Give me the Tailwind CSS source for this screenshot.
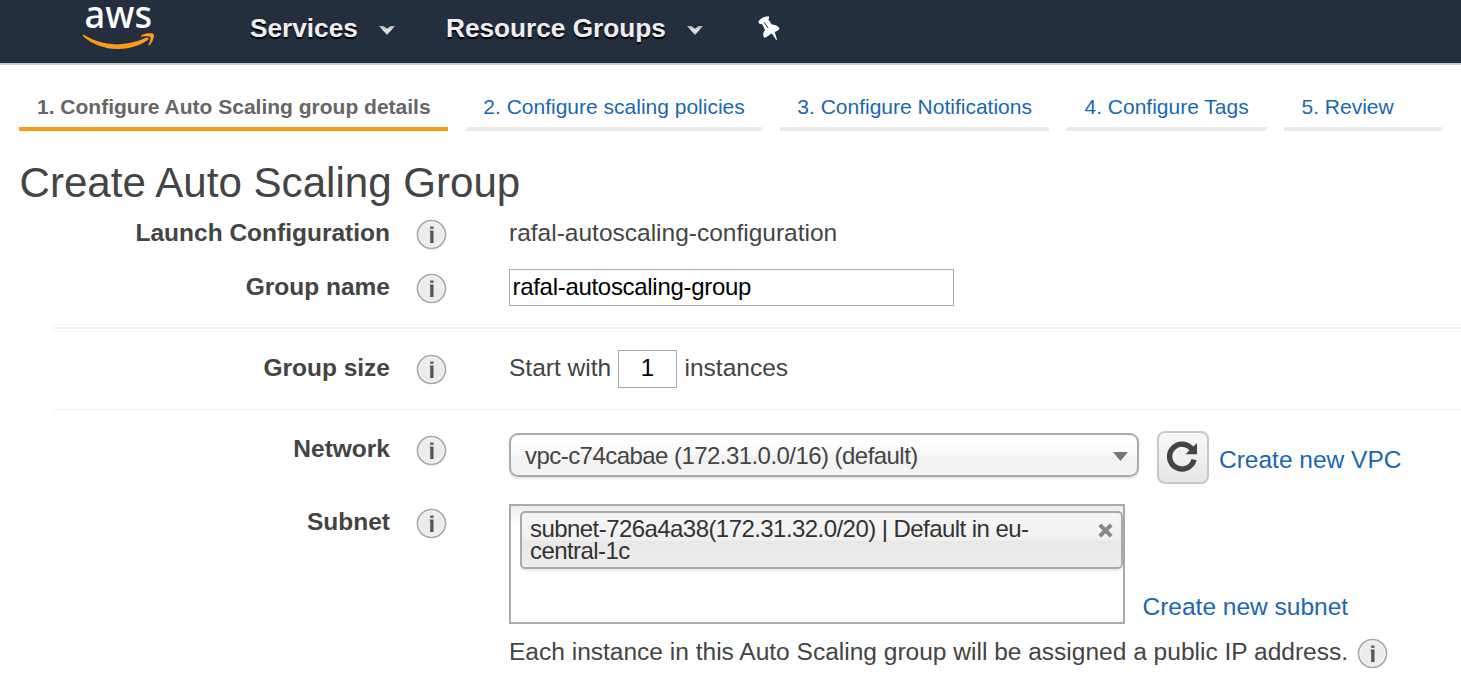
<!DOCTYPE html>
<html lang="en">
<head>
<meta charset="utf-8">
<title>Create Auto Scaling Group</title>
<script src="https://cdn.jsdelivr.net/npm/@tailwindcss/browser@4"></script>
</head>
<body class="h-[700px] w-[1461px] overflow-hidden bg-white font-['Liberation_Sans',Arial,sans-serif] text-[24.5px] leading-[30px] text-[#444]">
<svg class="absolute size-0">
  <defs>
    <linearGradient id="chev" x1="0" y1="0" x2="0" y2="1"><stop offset="0" stop-color="#aaa"/><stop offset=".5" stop-color="#e8e8e8"/><stop offset="1" stop-color="#bbb"/></linearGradient>
    <symbol id="info" viewBox="0 0 31 31">
      <circle cx="15.5" cy="15.5" r="14" fill="#ececec" stroke="#a9a9a9" stroke-width="1.7"/>
      <circle cx="15.5" cy="15.5" r="12.6" fill="none" stroke="#f6f6f6" stroke-width="1"/>
      <path d="M14.200 7.400h3.300v2.600h-3.300z" fill="#666"/>
      <path d="M13.600 11.600h3.900v12.300h-3.300v-11.300h-.6z" fill="#555"/>
    </symbol>
    <symbol id="chevron" viewBox="0 0 16 11"><path d="M0 1h4.600l3.400 2.800L11.400 1H16L8 10z" fill="url(#chev)"/></symbol>
  </defs>
</svg>

<header class="flex h-[65px] items-start border-b-2 border-[#ccc] bg-[#232f3e] text-[26.2px] font-bold text-[#eee] [text-shadow:0_2px_1px_#000]">
  <svg class="ml-[82px] h-[52px] w-[74px] shrink-0" viewBox="82 0 74 52">
    <text x="84.500" y="28.300" font-family="Noto Sans" font-weight="500" font-size="37.500" textLength="67.500" lengthAdjust="spacingAndGlyphs" fill="#fff" style="text-shadow:none">aws</text>
    <path d="M83.200 34.600C93 40.500 104 44.400 117 44.400C127 44.400 137 42 146.500 37.600C148.600 36.800 149.500 39 147.600 40.300C139.500 46 128 49 118 49C104.500 49 92 44 83.400 36.400C82.600 35.500 82.600 34.400 83.200 34.600Z" fill="#ff9a1a"/>
    <path d="M141.300 35.300C145 32.700 152.600 32.700 153.700 34C154.700 36 152.800 42.300 149.500 45.300C148.800 45.900 148.300 45.500 148.500 44.700C149.500 42.300 151 38.500 150.400 37.400C149.600 36 144.700 36.300 142 36.600C141 36.700 140.700 35.900 141.300 35.300Z" fill="#ff9a1a"/>
  </svg>
  <span class="ml-[94px] mt-[13px] w-[129px] whitespace-nowrap">Services</span>
  <svg class="mt-[25px] h-[11px] w-[16px] shrink-0"><use href="#chevron"/></svg>
  <span class="ml-[51px] mt-[13px] w-[241px] whitespace-nowrap">Resource Groups</span>
  <svg class="mt-[25px] h-[11px] w-[16px] shrink-0"><use href="#chevron"/></svg>
  <svg class="ml-[54px] mt-[15px] h-[26px] w-[24px] shrink-0" viewBox="757 15 24 26">
    <path d="M758.300 21.500C759.500 19 764 16.300 768.500 16.300C769.500 17 769.300 18.500 768.300 19.200L771.800 24.500C775 24.600 778 25.700 779.500 28.500C779 30 777.300 31 774.700 31.900L777 39.500L776.200 40L771.800 33.400C769 35 766 37.600 764.300 37.700C762.300 35.500 763.300 32.200 765 29.800L762 24C760.500 24.500 758.500 23.500 758.300 21.500Z" fill="#fff"/>
    <path d="M764.300 22.300L768 28" stroke="#232f3e" stroke-width="1" fill="none"/>
  </svg>
</header>

<nav class="flex h-[66px] gap-[18px] pl-[19px] text-[21px] text-[#1a67b0]">
  <div class="w-[429px] whitespace-nowrap border-b-4 border-[#ff9914] pl-[18px] pt-[27px] font-bold text-[#666]">1. Configure Auto Scaling group details</div>
  <a class="w-[296px] border-b-4 border-[#eaeaea] pl-[17.3px] pt-[27px]">2. Configure scaling policies</a>
  <a class="w-[269px] border-b-4 border-[#eaeaea] pl-[17.3px] pt-[27px]">3. Configure Notifications</a>
  <a class="w-[200px] border-b-4 border-[#eaeaea] pl-[17.5px] pt-[27px]">4. Configure Tags</a>
  <a class="-ml-px w-[158px] border-b-4 border-[#eaeaea] pl-[17.5px] pt-[27px]">5. Review</a>
</nav>

<main>
  <h1 class="mt-[27px] h-[50px] pl-[19.500px] text-[42.1px] leading-[50px]">Create Auto Scaling Group</h1>

  <div class="flex h-[61px] items-start pt-[10px]">
    <span class="w-[390px] text-right font-bold">Launch Configuration</span>
    <svg class="ml-[26px] mt-[1px] size-[31px] shrink-0"><use href="#info"/></svg>
    <span class="ml-[62px]">rafal-autoscaling-configuration</span>
  </div>

  <div class="flex h-[58px] items-start">
    <span class="mt-[3px] w-[390px] text-right font-bold">Group name</span>
    <svg class="ml-[26px] mt-[4px] size-[31px] shrink-0"><use href="#info"/></svg>
    <div class="ml-[62px] h-[37px] w-[445px] border border-[#a9a9a9] bg-white pl-[2.500px] pt-[2px] text-[24px] tracking-[-0.3px] text-black">rafal-autoscaling-group</div>
  </div>

  <div class="ml-[54px] h-[2px] bg-[#eee]"></div>

  <div class="flex h-[80px] items-start pt-[21px]">
    <span class="mt-[3px] w-[390px] text-right font-bold">Group size</span>
    <svg class="ml-[26px] mt-[4px] size-[31px] shrink-0"><use href="#info"/></svg>
    <span class="ml-[62px] mt-[3px] w-[109px]">Start with</span>
    <div class="h-[38px] w-[59px] border border-[#a9a9a9] bg-white pt-[2px] text-center text-[24px] text-black">1</div>
    <span class="ml-[7.500px] mt-[3px]">instances</span>
  </div>

  <div class="ml-[54px] h-px bg-[#eee]"></div>

  <div class="flex h-[94px] items-start pt-[21px]">
    <span class="mt-[3px] w-[390px] text-right font-bold">Network</span>
    <svg class="ml-[26px] mt-[4px] size-[31px] shrink-0"><use href="#info"/></svg>
    <div class="ml-[62px] mt-[2px] flex h-[44px] w-[630px] items-start justify-between rounded-[9px] border-2 border-[#aaa] bg-[linear-gradient(#fff_20%,#f8f8f8_50%,#f1f1f1_52%,#f5f5f5_100%)] pl-[14px] pr-[9px] pt-[6px] text-[24px] tracking-[-0.55px] shadow-[0_2px_2px_rgba(0,0,0,0.1)]">
      <span>vpc-c74cabae (172.31.0.0/16) (default)</span>
      <svg class="mt-[11px] h-[9px] w-[15px]" viewBox="0 0 15 9"><path d="M0 0h15L7.500 9z" fill="#777"/></svg>
    </div>
    <div class="ml-[18px] h-[53px] w-[52px] rounded-[8px] border-2 border-[#c8c8c8] bg-linear-to-b from-[#f8f8f8] to-[#e6e6e6]">
      <svg class="h-[49px] w-[48px]" viewBox="1159 433 48 49">
        <path d="M1192.500 450A12.400 12.400 0 1 0 1194 459.600" fill="none" stroke="#444" stroke-width="5.400"/>
        <path d="M1197 443v11.200h-11.400z" fill="#444"/>
      </svg>
    </div>
    <a class="ml-[10px] mt-[14px] whitespace-nowrap text-[#1a67b0]">Create new VPC</a>
  </div>

  <div class="flex h-[120px] items-start">
    <span class="mt-[3px] w-[390px] text-right font-bold">Subnet</span>
    <svg class="ml-[26px] mt-[4px] size-[31px] shrink-0"><use href="#info"/></svg>
    <div class="ml-[62px] h-[120px] w-[616px] border-2 border-[#aaa] bg-[linear-gradient(#eee_1%,#fff_15%)] pl-[9px] pt-[5px]">
      <div class="flex h-[58px] w-[603px] justify-between rounded-[5px] border-2 border-[#aaa] bg-[linear-gradient(#f4f4f4_20%,#f0f0f0_50%,#e8e8e8_52%,#eee_100%)] pl-[8px] pr-[8px] pt-[5px] text-[24px] leading-[22px] tracking-[-0.56px] text-[#333] shadow-[0_2px_1px_rgba(0,0,0,0.08)]">
        <span>subnet-726a4a38(172.31.32.0/20) | Default in eu-<br>central-1c</span>
        <svg class="mt-[5px] h-[15px] w-[15px] shrink-0" viewBox="0 0 15 15"><path d="M1.800 1.800L13.200 13.200M13.200 1.800L1.800 13.200" stroke="#868686" stroke-width="4"/></svg>
      </div>
    </div>
    <a class="ml-[17.500px] mt-[88px] text-[#1a67b0]">Create new subnet</a>
  </div>

  <div class="flex items-start pl-[509px] pt-[13px]">
    <span class="w-[848px] whitespace-nowrap text-[24.53px]">Each instance in this Auto Scaling group will be assigned a public IP address.</span>
    <svg class="mt-[1px] size-[31px] shrink-0"><use href="#info"/></svg>
  </div>
</main>
</body>
</html>
